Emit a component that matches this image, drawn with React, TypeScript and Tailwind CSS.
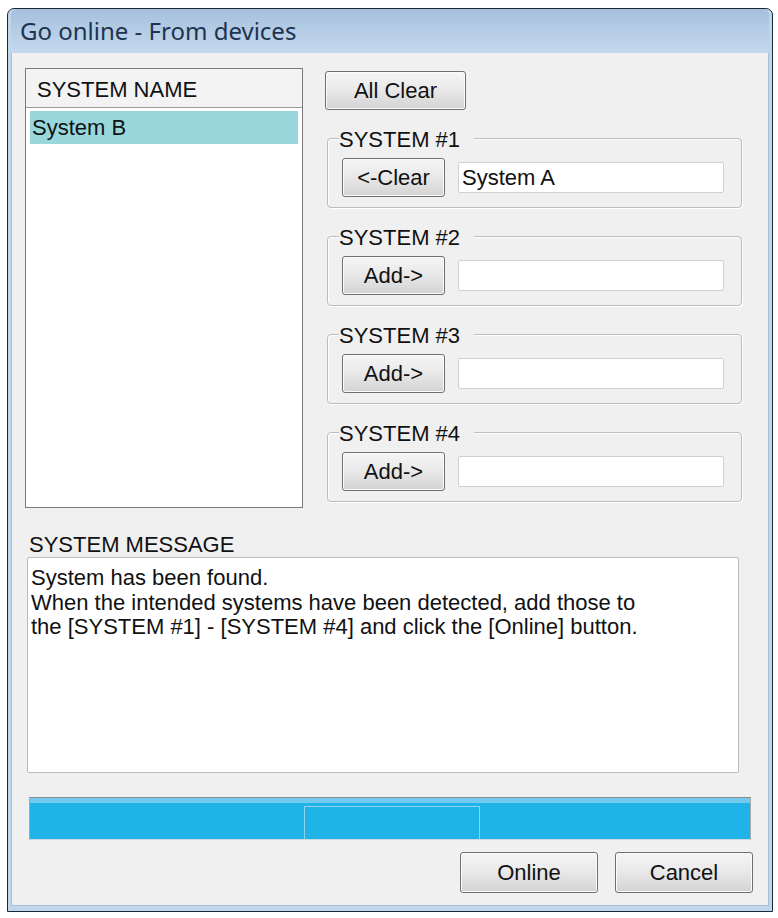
import React from "react";

const FONT = "font-['Liberation_Sans',Arial,sans-serif]";

function WinButton({ children, className }: { children: React.ReactNode; className: string }) {
  return (
    <button
      className={`flex items-center justify-center rounded-[3px] border border-[#707070] bg-linear-to-b from-[#f6f6f6] via-[#e8e8e8] via-50% to-[#d3d3d3] text-[22px] leading-none text-[#111] shadow-[inset_0_0_0_1px_#fbfbfb] ${className}`}
    >
      {children}
    </button>
  );
}

function SystemGroup({ n, action, value }: { n: number; action: string; value: string }) {
  return (
    <div className="relative ml-[2px] mt-[28px] h-[70px] w-[415px] rounded-[4px] border border-[#bdbdbd] shadow-[inset_1px_1px_0_#ffffff,1px_1px_0_#ffffff]">
      <span className="absolute left-[11px] top-[-11px] bg-[#f0f0f0] pr-[14px] text-[22px] leading-[24px] text-[#111]">
        SYSTEM #{n}
      </span>
      <div className="flex items-center gap-[13px] pl-[14px] pt-[19px]">
        <WinButton className="h-[39px] w-[103px]">{action}</WinButton>
        <div className="flex h-[31px] w-[266px] items-center rounded-[2px] border border-[#cdd1d6] bg-white pl-[3px] text-[22px] text-[#111]">
          {value}
        </div>
      </div>
    </div>
  );
}

export default function App() {
  return (
    <div className={`min-h-screen bg-white pl-[7px] pt-[8px] ${FONT}`}>
      <div className="flex h-[904px] w-[766px] flex-col rounded-t-[7px] border border-[#1b2836] bg-[#c0d6eb] px-[3px] pb-[5px]">
        {/* Title bar */}
        <div className="flex h-[44px] items-center rounded-t-[6px] bg-linear-to-b from-[#a6c0dc] to-[#c4d9ee] pl-[9px]">
          <span className="font-['Noto_Sans',sans-serif] text-[24px] text-[#1e3350]">Go online - From devices</span>
        </div>

        {/* Client area */}
        <div className="flex flex-1 flex-col border border-t-0 border-[#a9bdd1] bg-[#f0f0f0]">
          <div className="flex pl-[13px] pt-[15px]">
            {/* System name list */}
            <div className="flex h-[440px] w-[278px] flex-col border border-[#7b7b7b] bg-white">
              <div className="flex h-[39px] items-center border-b border-[#9c9c9c] bg-[#f3f3f3] pl-[11px] pt-[2px] text-[22px] text-[#111]">
                SYSTEM NAME
              </div>
              <div className="mx-[4px] mt-[3px] flex h-[33px] items-center bg-[#98d8dd] pl-[2px] text-[22px] text-[#111]">
                System B
              </div>
            </div>

            {/* Target systems */}
            <div className="ml-[22px] flex flex-col pt-[3px]">
              <WinButton className="h-[39px] w-[141px]">All Clear</WinButton>
              <SystemGroup n={1} action="<-Clear" value="System A" />
              <SystemGroup n={2} action="Add->" value="" />
              <SystemGroup n={3} action="Add->" value="" />
              <SystemGroup n={4} action="Add->" value="" />
            </div>
          </div>

          {/* Message */}
          <div className="mt-[25px] pl-[17px] text-[22px] leading-[24px] text-[#111]">SYSTEM MESSAGE</div>
          <div className="ml-[15px] h-[216px] w-[712px] rounded-[2px] border border-[#b9bdc2] bg-white pl-[3px] pt-[8px] text-[22px] leading-[24.5px] text-[#111]">
            <div>System has been found.</div>
            <div>When the intended systems have been detected, add those to</div>
            <div>the [SYSTEM #1] - [SYSTEM #4] and click the [Online] button.</div>
          </div>

          {/* Progress */}
          <div className="relative ml-[17px] mt-[24px] flex h-[43px] w-[722px] flex-col border-x border-t border-b border-x-[#a8a8a8] border-t-[#8a8a8a] border-b-[#cfd8de]">
            <div className="h-[5px] bg-[#74c9ee]" />
            <div className="flex-1 bg-[#1fb3e8]" />
            <div className="absolute left-[274px] top-[8px] h-[33px] w-[176px] border border-b-0 border-[#8dd2ee]" />
          </div>

          {/* Buttons */}
          <div className="mt-[12px] flex justify-end gap-[17px] pr-[15px]">
            <WinButton className="h-[41px] w-[138px]">Online</WinButton>
            <WinButton className="h-[41px] w-[138px]">Cancel</WinButton>
          </div>
        </div>
      </div>
    </div>
  );
}
